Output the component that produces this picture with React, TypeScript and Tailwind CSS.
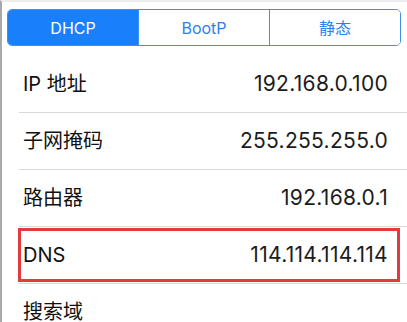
import React from "react";

const rows: { label: string; value: string; mark?: boolean }[] = [
  { label: "IP 地址", value: "192.168.0.100" },
  { label: "子网掩码", value: "255.255.255.0" },
  { label: "路由器", value: "192.168.0.1" },
  { label: "DNS", value: "114.114.114.114", mark: true },
  { label: "搜索域", value: "" },
];

const tabs = ["DHCP", "BootP", "静态"];

export default function App() {
  return (
    <div
      className="w-[407px] h-[322px] overflow-hidden bg-white border-l-2 border-t-2 border-l-[#a9a9a9] border-t-[#ececec]"
      style={{ fontFamily: 'Inter, "Noto Sans CJK SC", sans-serif' }}
    >
      <div className="ml-[5px] mt-[7px] w-[394px] h-[37px] flex rounded-[5px] border border-[#3f8ef0] overflow-hidden">
        {tabs.map((t, i) => (
          <div
            key={t}
            className={
              "flex-1 flex items-center justify-center text-[16px] " +
              (i === 0 ? "bg-[#1a7ffb] text-white" : "bg-white text-[#2f80ee] border-l border-[#3f8ef0]")
            }
          >
            {t}
          </div>
        ))}
      </div>

      <div className="mt-[10px] ml-[17px]">
        {rows.map((r) => (
          <div key={r.label} className="relative h-[57px] flex items-center justify-between border-b border-[#d9d9d9] pl-[4px] pr-[19px] text-[20px]">
            <span className="text-[#111]">{r.label}</span>
            <span className="text-[#1c1c1c] text-[21px] tracking-[0.3px]">{r.value}</span>
            {r.mark && <div className="absolute left-[-1px] right-[7px] top-[1px] bottom-[1px] border-[3px] border-[#e23a3f]" />}
          </div>
        ))}
      </div>
    </div>
  );
}
